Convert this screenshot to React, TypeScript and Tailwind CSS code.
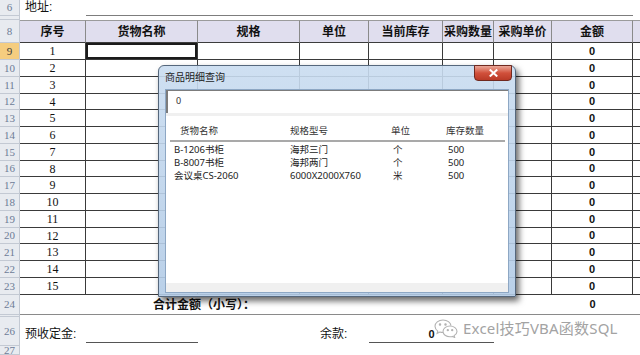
import React from 'react';

const SANS = "font-['Liberation_Sans','Noto_Sans_CJK_SC',sans-serif]";
const UI = "font-['Noto_Sans','Noto_Sans_CJK_SC',sans-serif]";

const COLS = [
  { label: '序号', w: 'w-[66px]' },
  { label: '货物名称', w: 'w-[112px]' },
  { label: '规格', w: 'w-[102px]' },
  { label: '单位', w: 'w-[69px]' },
  { label: '当前库存', w: 'w-[74px]' },
  { label: '采购数量', w: 'w-[51px]' },
  { label: '采购单价', w: 'w-[58px]' },
  { label: '金额', w: 'w-[81px]' },
  { label: '', w: 'w-[40px]' },
];

const ITEMS = [
  { name: 'B-1206书柜', spec: '海邦三门', unit: '个', stock: '500' },
  { name: 'B-8007书柜', spec: '海邦两门', unit: '个', stock: '500' },
  { name: '会议桌CS-2060', spec: '6000X2000X760', unit: '米', stock: '500' },
];

interface RowHeadProps {
  n?: number;
  h: string;
  active?: boolean;
}

const RowHead: React.FC<RowHeadProps> = ({ n, h, active = false }) => (
  <div
    className={`w-[20px] shrink-0 ${h} border-r border-b border-[#c3c9d3] flex items-center justify-center overflow-hidden text-[11px] leading-[9px] font-['Liberation_Serif',serif] ${
      active ? 'bg-[#f5cd7f] text-[#3a3a3a]' : 'bg-[#e8ebf0] text-[#6d7c96]'
    }`}
  >
    {n}
  </div>
);

const WeChatIcon = () => (
  <svg width="26" height="20" viewBox="0 0 26 20" fill="none" stroke="#b3b3b3" strokeWidth="1.1">
    <path d="M10 2c-4.6 0-8 2.8-8 6.3 0 2 1.1 3.6 2.8 4.8l-.7 2.3 2.7-1.4c1 .3 2 .5 3.2.5" />
    <path d="M10 2c4.3 0 7.6 2.4 8 5.6" />
    <path d="M17 8c-3.9 0-7 2.5-7 5.4 0 3 3.1 5.4 7 5.4.9 0 1.7-.1 2.5-.4l2.2 1.1-.6-1.9c1.7-1.1 2.9-2.5 2.9-4.2C24 10.5 20.9 8 17 8z" />
    <circle cx="7" cy="6.5" r=".7" fill="#b3b3b3" />
    <circle cx="12.5" cy="6.5" r=".7" fill="#b3b3b3" />
    <circle cx="14.8" cy="12.2" r=".6" fill="#b3b3b3" />
    <circle cx="19.2" cy="12.2" r=".6" fill="#b3b3b3" />
  </svg>
);

const LookupDialog = () => (
  <div className={`absolute left-[158px] top-[65px] w-[358px] h-[232px] flex flex-col rounded-t-[6px] border border-[#55677c] bg-gradient-to-b from-[#c9dcf0]/90 to-[#b2cbe6]/90 shadow-[3px_4px_6px_rgba(0,0,0,0.6)] ${UI}`}>
    <div className="h-[23px] shrink-0 flex items-center pl-[6px] text-[10px] text-[#1c1c1c]">商品明细查询</div>
    <div className="absolute right-[3px] -top-px w-[38px] h-[16px] flex items-center justify-center rounded-b-[4px] border border-[#70291f] bg-gradient-to-b from-[#e9a698] via-[#d1503b] to-[#b93a27]">
      <svg width="9" height="8" viewBox="0 0 9 8" stroke="white" strokeWidth="2" strokeLinecap="square">
        <path d="M1.5 1.2l6 5.6M7.5 1.2l-6 5.6" />
      </svg>
    </div>
    <div className="mx-[6px] mb-[3px] flex-1 flex flex-col border border-[#8da7c4] bg-[#f0f0f0]">
      <div className="h-[23px] shrink-0 bg-white border-l-2 border-t border-[#7c7c7c] pl-[8px] pt-[3px] text-[9px] text-[#333]">0</div>
      <div className="mt-[3px] mb-[9px] flex-1 bg-white text-[9.5px] text-[#222] leading-[13px]">
        <div className="grid grid-cols-[116px_101px_55px_1fr] pl-[8px] pt-[8px] h-[24px]">
          <span className="pl-[6px] text-[#333]">货物名称</span>
          <span className="text-[#333]">规格型号</span>
          <span className="text-[#333]">单位</span>
          <span className="text-[#333]">库存数量</span>
        </div>
        <div className="ml-[4px] mr-[3px] h-[2px] bg-[#a9a9a9]" />
        <div className="pt-[1px]">
          {ITEMS.map((it) => (
            <div key={it.name} className="grid grid-cols-[116px_103px_55px_1fr] pl-[8px] h-[13px]">
              <span>{it.name}</span>
              <span>{it.spec}</span>
              <span>{it.unit}</span>
              <span>{it.stock}</span>
            </div>
          ))}
        </div>
      </div>
    </div>
  </div>
);

export default function App() {
  const rows = Array.from({ length: 15 }, (_, i) => i);

  return (
    <div className={`relative w-[640px] h-[355px] overflow-hidden bg-white text-[#111] ${SANS}`}>
      {/* row 6 */}
      <div className="flex h-[16px]">
        <RowHead n={6} h="h-[16px]" />
        <div className="w-[66px] pl-[5px] text-[12px] leading-[14px]">地址:</div>
        <div className="w-[547px] border-b border-[#7d7d7d]" />
      </div>
      {/* row 7 (hidden) */}
      <div className="flex h-[4px]">
        <RowHead h="h-[4px]" />
      </div>
      {/* header row 8 */}
      <div className="flex h-[23px]">
        <RowHead n={8} h="h-[23px]" />
        {COLS.map((c) => (
          <div
            key={c.label + c.w}
            className={`${c.w} shrink-0 h-[23px] flex items-center justify-center border-t border-r border-b border-t-[#9b9b9b] border-r-[#8a8a8a] border-b-[#3c3c3c] bg-[#e0deee] text-[12px] font-bold whitespace-nowrap`}
          >
            {c.label}
          </div>
        ))}
      </div>
      {/* body rows 9-23 */}
      {rows.map((i) => {
        const h = i % 4 === 3 ? 'h-[16px]' : 'h-[17px]';
        return (
          <div key={i} className={`flex ${h}`}>
            <RowHead n={i + 9} h={h} active={i === 0} />
            {COLS.map((c, ci) => (
              <div
                key={ci}
                className={`${c.w} shrink-0 ${h} flex items-center justify-center border-r border-b border-[#3a3a3a] ${
                  i === 0 && ci === 1 ? 'shadow-[inset_0_0_0_2px_#1b1b1b]' : ''
                } ${ci === 8 ? 'border-r-0' : ''}`}
              >
                {ci === 0 && <span className="text-[12px] font-['Liberation_Serif',serif]">{i + 1}</span>}
                {ci === 7 && <span className="text-[11px] font-bold">0</span>}
              </div>
            ))}
          </div>
        );
      })}
      {/* row 24 total */}
      <div className="flex h-[20px]">
        <RowHead n={24} h="h-[20px]" />
        <div className="w-[532px] shrink-0 flex items-center pl-[133px] border-b border-[#8a8a8a] text-[12px] font-bold">
          合计金额（小写）：
        </div>
        <div className="w-[81px] shrink-0 flex items-center justify-center border-b border-[#8a8a8a] text-[11px] font-bold">0</div>
        <div className="flex-1 border-b border-[#8a8a8a]" />
      </div>
      {/* row 25 (hidden) */}
      <div className="flex h-[2px]">
        <RowHead h="h-[2px]" />
      </div>
      {/* row 26 */}
      <div className="flex h-[29px]">
        <RowHead n={26} h="h-[29px]" />
        <div className="w-[66px] shrink-0 pl-[5px] pt-[10px] text-[12px] leading-[14px] whitespace-nowrap">预收定金:</div>
        <div className="w-[112px] shrink-0 pt-[25px]">
          <div className="h-px bg-[#555]" />
        </div>
        <div className="w-[102px] shrink-0" />
        <div className="w-[69px] shrink-0 pl-[20px] pt-[10px] text-[12px] leading-[14px] whitespace-nowrap">余款:</div>
        <div className="w-[125px] shrink-0 flex flex-col items-center pt-[10px]">
          <span className="text-[11px] leading-[14px] font-bold">0</span>
          <div className="mt-[1px] w-full h-px bg-[#555]" />
        </div>
      </div>
      {/* row 27 */}
      <div className="flex h-[9px]">
        <RowHead n={27} h="h-[9px]" />
      </div>

      <LookupDialog />

      {/* watermark */}
      <div className="absolute left-[433px] top-[317px] flex items-center gap-[4px]">
        <WeChatIcon />
        <span className={`text-[15px] text-[#a3a3a3] tracking-[0.2px] ${UI}`}>Excel技巧VBA函数SQL</span>
      </div>
    </div>
  );
}
